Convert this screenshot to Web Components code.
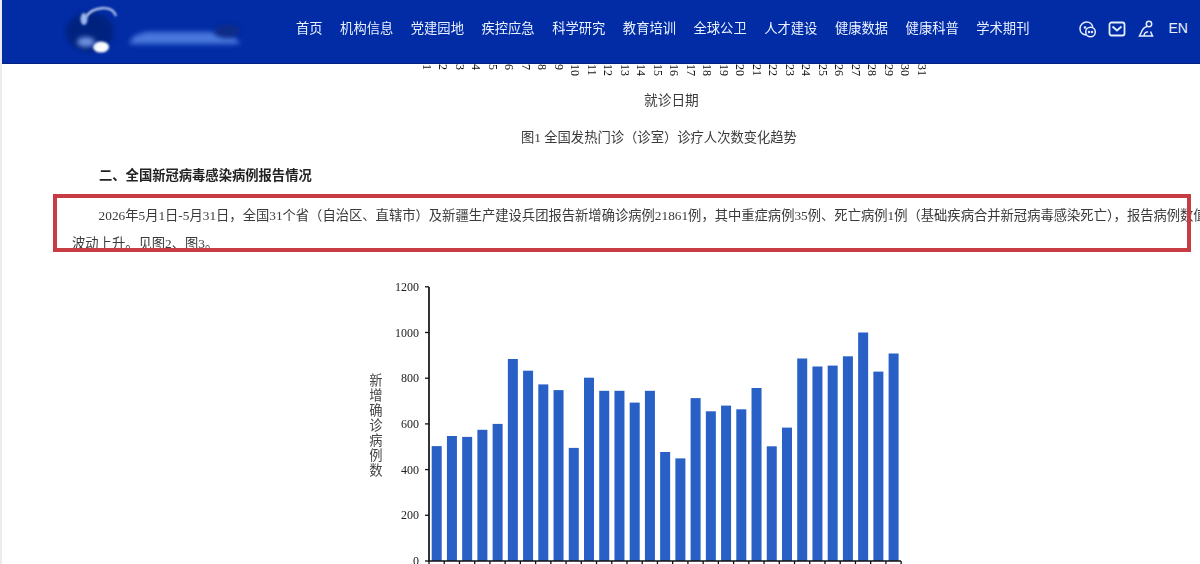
<!DOCTYPE html>
<html lang="zh-CN">
<head>
<meta charset="utf-8">
<title>全国新冠病毒感染疫情情况</title>
<style>
	html, body { margin: 0; height: 564px; overflow: hidden; background: #fff; }
	body { font-family: "Liberation Serif", "Noto Sans CJK SC", serif; color: #333; }
</style>
</head>
<body>
<page-shell>
	<site-header slot="header"></site-header>
	<tick-row></tick-row>
	<report-text kind="axis" left="644" top="13">就诊日期</report-text>
	<report-text kind="caption" left="521" top="17">图1 全国发热门诊（诊室）诊疗人次数变化趋势</report-text>
	<report-text kind="heading" left="99" top="18">二、全国新冠病毒感染病例报告情况</report-text>
	<marked-paragraph>2026年5月1日-5月31日，全国31个省（自治区、直辖市）及新疆生产建设兵团报告新增确诊病例21861例，其中重症病例35例、死亡病例1例（基础疾病合并新冠病毒感染死亡），报告病例数值<br>波动上升。见图2、图3。</marked-paragraph>
	<bar-chart></bar-chart>
</page-shell>

<script>
class PageShell extends HTMLElement {
	constructor() {
		super();
		this.attachShadow({ mode: 'open' });
		this.shadowRoot.innerHTML = `
			<style>
				:host { display: block; height: 564px; overflow: hidden; }
				#wrap { height: 100%; border-left: 2px solid #ececec; box-sizing: border-box; }
				#main { margin-left: -2px; filter: blur(.35px); }
			</style>
			<div id="wrap">
				<slot name="header"></slot>
				<div id="main"><slot></slot></div>
			</div>
		`;
	}
}

class SiteHeader extends HTMLElement {
	constructor() {
		super();
		const items = ['首页', '机构信息', '党建园地', '疾控应急', '科学研究', '教育培训', '全球公卫', '人才建设', '健康数据', '健康科普', '学术期刊'];
		this.attachShadow({ mode: 'open' });
		this.shadowRoot.innerHTML = `
			<style>
				:host {
					display: flex;
					height: 64px;
					box-sizing: border-box;
					background: #012ca6;
					border-bottom: 1px solid #00237f;
					padding: 0 0 8px 60px;
					align-items: center;
					color: #eaf1ff;
					font: 13.300px/20px "Noto Sans CJK SC", sans-serif;
				}
				#logo { width: 190px; height: 64px; margin-top: 8px; flex: none; }
				nav { display: flex; gap: 17.500px; margin-left: 44px; white-space: nowrap; filter: blur(.3px); }
				#tools { display: flex; align-items: center; gap: 11px; margin-left: 50px; }
				#tools svg { width: 18px; height: 18px; display: block; fill: none; stroke: #e4eeff; stroke-width: 1.500; margin-top: 3px; }
				#en { font: 14px "Liberation Sans", sans-serif; margin-left: 2px; }
			</style>
			<svg id="logo" viewBox="0 0 190 64">
				<defs>
					<filter id="b1" x="-30%" y="-60%" width="160%" height="220%"><feGaussianBlur stdDeviation="2.400"/></filter>
					<filter id="b2" x="-30%" y="-60%" width="160%" height="220%"><feGaussianBlur stdDeviation=".9"/></filter>
				</defs>
				<ellipse cx="28" cy="32" rx="24" ry="20" fill="#01217f" filter="url(#b1)"/>
				<path d="M24 17C30 7 50 4 54 16" fill="none" stroke="#e6eeff" stroke-width="1.800" filter="url(#b2)"/>
				<ellipse cx="22" cy="19" rx="3.500" ry="6" fill="#9db6ee" filter="url(#b2)"/>
				<ellipse cx="39" cy="47" rx="8" ry="5.500" fill="#fafbff" filter="url(#b2)"/>
				<ellipse cx="24" cy="42" rx="9" ry="5" fill="#6f92e0" filter="url(#b1)"/>
				<path d="M16 48H40" stroke="#eef2ff" stroke-width="1.200" filter="url(#b2)"/>
				<path d="M67 44L72 36L84 32H150L172 36L178 44Z" fill="#4a77dc" filter="url(#b1)"/>
				<ellipse cx="165" cy="31" rx="13" ry="7" fill="#0a2a88" filter="url(#b1)"/>
				<path d="M65 48H178" stroke="#7fa2e6" stroke-width="1.800" stroke-dasharray="3 1" filter="url(#b2)"/>
			</svg>
			<nav>${items.map(t => `<span>${t}</span>`).join('')}</nav>
			<div id="tools">
				<svg viewBox="0 0 18 18">
					<path d="M7 15C3.500 14.500 1 12 1 8.500C1 5 4 2 7.500 2C11 2 13.500 4.500 13.800 7.500"/>
					<circle cx="11.500" cy="12" r="4.800"/>
					<circle cx="6" cy="7.500" r=".6"/><circle cx="10" cy="12" r=".5"/><circle cx="13" cy="12" r=".5"/>
				</svg>
				<svg viewBox="0 0 18 18" style="stroke-width:1.800">
					<rect x="1.500" y="2.500" width="15" height="13" rx="2"/>
					<path d="M4.500 6.500L9 10.500L13.500 6.500"/>
				</svg>
				<svg viewBox="0 0 18 18">
					<circle cx="12" cy="4" r="2.700"/>
					<path d="M10 6.500C7 7 5.500 9 4 13L2.500 16H15.500L13.500 11.500"/>
					<path d="M7 16C7 13 9 11.500 11 12"/>
				</svg>
				<span id="en">EN</span>
			</div>
		`;
	}
}

// Numeros girados del eje del grafico anterior, cortados por la cabecera
class TickRow extends HTMLElement {
	constructor() {
		super();
		let spans = '';
		for (let i = 1; i <= 31; i++) spans += `<span>${i}</span>`;
		this.attachShadow({ mode: 'open' });
		this.shadowRoot.innerHTML = `
			<style>
				:host { display: flex; height: 14px; margin-left: 418px; color: #111; font: 12px/16.500px "Liberation Serif", serif; }
				span { writing-mode: vertical-rl; width: 16.500px; flex: none; text-align: left; }
			</style>
			${spans}
		`;
	}
}

class ReportText extends HTMLElement {
	constructor() {
		super();
		this.attachShadow({ mode: 'open' });
		this.shadowRoot.innerHTML = `
			<style>
				:host { display: block; font-size: 13.300px; line-height: 20px; color: #3a3a3a; }
				:host([kind="heading"]) { font-weight: 700; color: #222; }
				:host([kind="axis"]) { font-size: 13.700px; }
			</style>
			<slot></slot>
		`;
	}
	connectedCallback() {
		this.style.paddingLeft = this.getAttribute('left') + 'px';
		this.style.marginTop = this.getAttribute('top') + 'px';
	}
}

class MarkedParagraph extends HTMLElement {
	constructor() {
		super();
		this.attachShadow({ mode: 'open' });
		this.shadowRoot.innerHTML = `
			<style>
				:host {
					display: block;
					position: relative;
					margin-top: 8px;
					padding: 8px 0 0 72px;
					height: 50px;
					font-size: 13.300px;
					line-height: 28px;
					color: #3a3a3a;
					white-space: nowrap;
				}
				#text { display: block; text-indent: 26.600px; }
				#mark {
					position: absolute;
					left: 53px;
					top: 0;
					width: 1138px;
					height: 58px;
					box-sizing: border-box;
					border: 4px solid #c63c42;
				}
			</style>
			<div id="text"><slot></slot></div>
			<div id="mark"></div>
		`;
	}
}

class BarChart extends HTMLElement {
	constructor() {
		super();
		const valores = [503, 547, 543, 574, 600, 884, 833, 773, 748, 495, 802, 745, 745, 693, 745, 477, 449, 713, 655, 680, 664, 757, 502, 584, 886, 851, 855, 896, 1000, 829, 908];
		const y = v => 271 - v * 0.2285; // base del eje en y=271 dentro del svg
		const barras = valores.map((v, i) =>
			`<rect x="${(71.700 + i * 15.230).toFixed(2)}" y="${y(v).toFixed(1)}" width="10" height="${(271 - y(v)).toFixed(1)}"/>`).join('');
		let marcas = '';
		for (let v = 0; v <= 1200; v += 200) {
			marcas += `<path d="M65 ${y(v)}H69"/><text x="59" y="${y(v) + 4}" text-anchor="end">${v}</text>`;
		}
		for (let i = 0; i <= 31; i++) {
			const x = 69 + i * 15.230;
			marcas += `<path d="M${x} 271V275"/>`;
		}
		this.attachShadow({ mode: 'open' });
		this.shadowRoot.innerHTML = `
			<style>
				:host { display: block; margin: 38px 0 0 360px; height: 290px; }
				svg { display: block; overflow: visible; }
				text { font: 12px "Liberation Serif", serif; fill: #222; stroke: none; }
				#ylabel { font: 13.300px/15px "Liberation Serif", "Noto Sans CJK SC", serif; fill: #444; writing-mode: vertical-rl; letter-spacing: 1.700px; }
				#bars { fill: #2860c6; }
				#axis path { stroke: #111; stroke-width: 1.300; fill: none; }
			</style>
			<svg width="560" height="290" viewBox="0 0 560 290">
				<g id="bars">${barras}</g>
				<g id="axis">
					<path d="M69 -3V271H541" style="stroke-width:1.700"/>
					${marcas}
				</g>
				<text id="ylabel" x="15" y="83">新增确诊病例数</text>
			</svg>
		`;
	}
}

customElements.define('page-shell', PageShell);
customElements.define('site-header', SiteHeader);
customElements.define('tick-row', TickRow);
customElements.define('report-text', ReportText);
customElements.define('marked-paragraph', MarkedParagraph);
customElements.define('bar-chart', BarChart);
</script>
</body>
</html>
